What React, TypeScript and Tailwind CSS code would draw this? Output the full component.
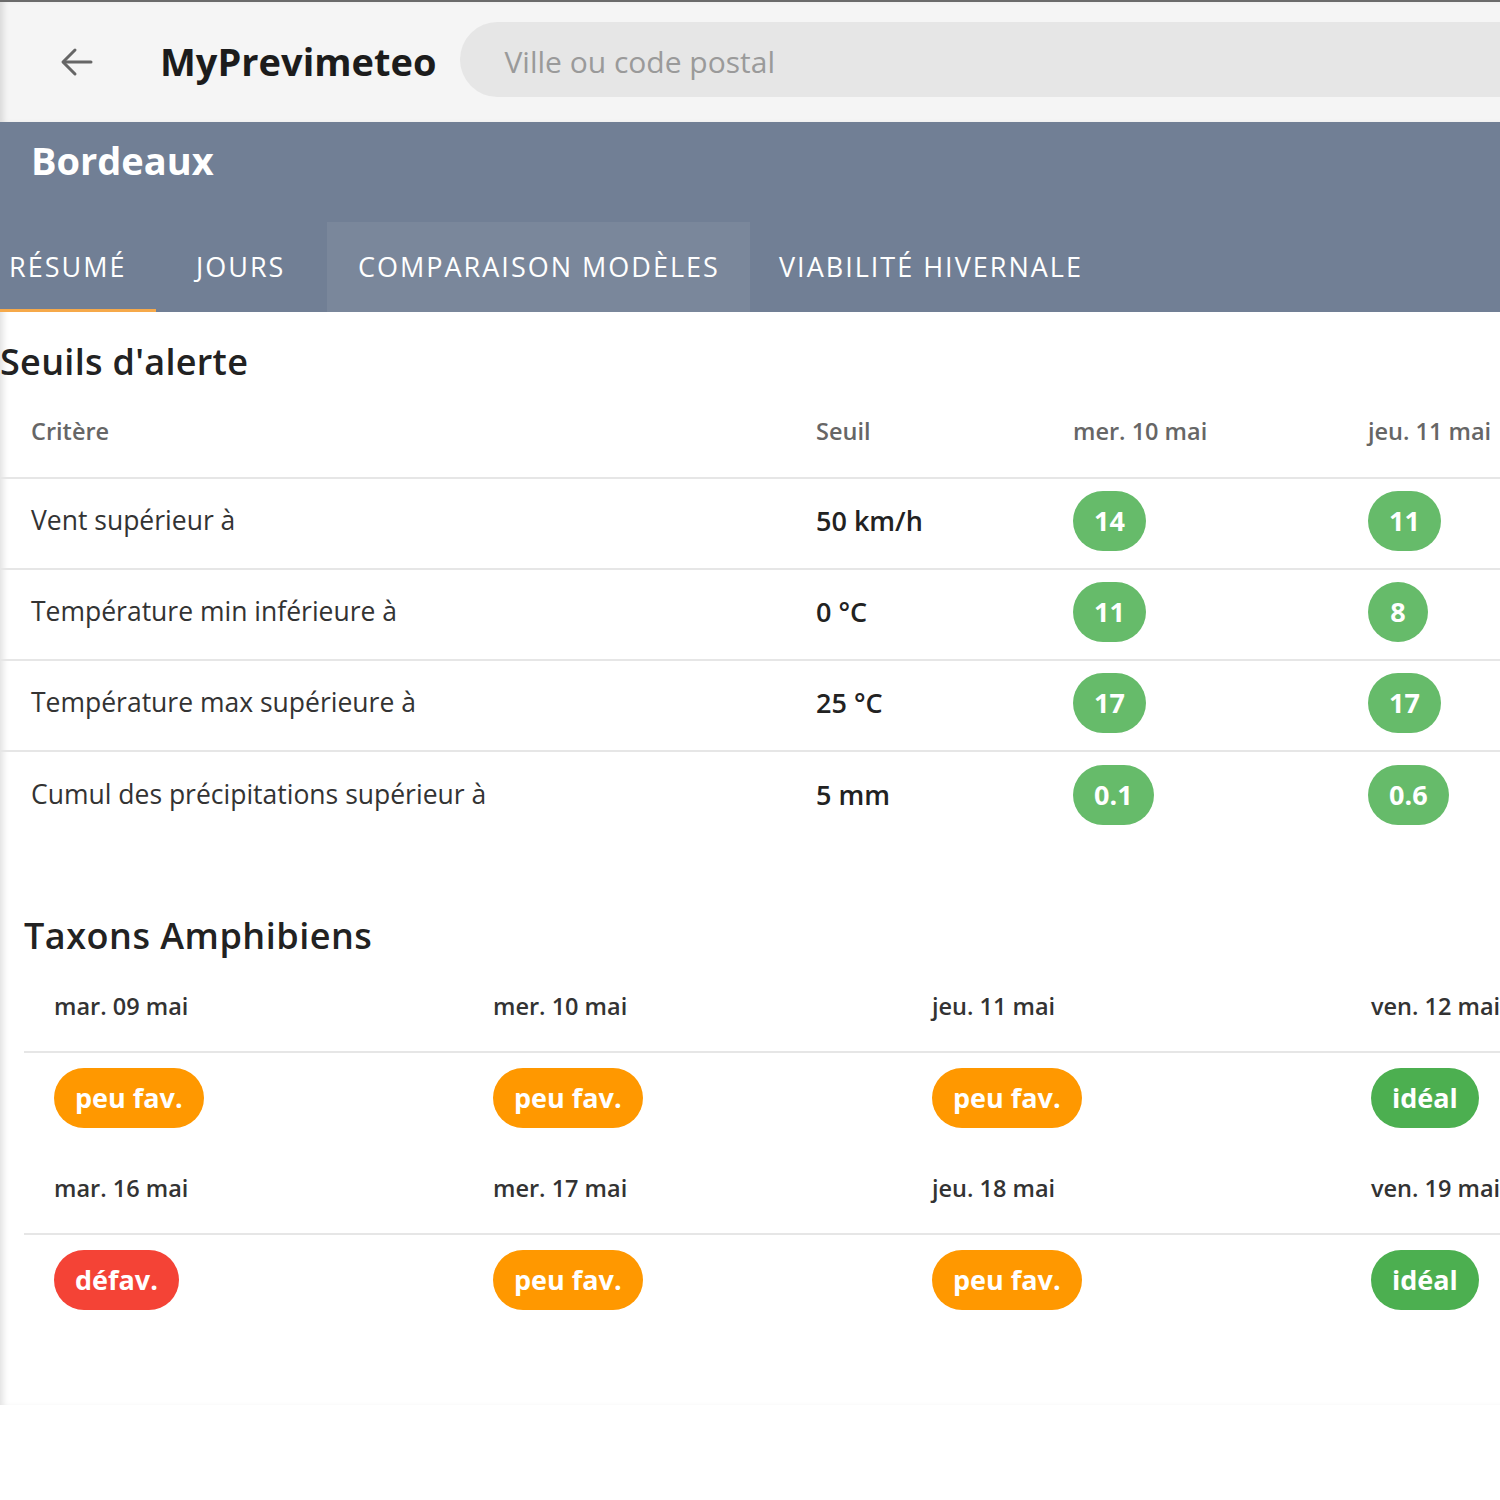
import React from "react";

const font = { fontFamily: '"Open Sans", "Noto Sans", sans-serif' };

type Tone = "green" | "ideal" | "orange" | "red";

function Badge({ label, tone }: { label: string; tone: Tone }) {
  const cls =
    tone === "green"
      ? "bg-[#66bb6a]"
      : tone === "ideal"
      ? "bg-[#4caf50]"
      : tone === "orange"
      ? "bg-[#ff9800]"
      : "bg-[#f44336]";
  return (
    <span
      className={`inline-flex h-[60px] min-w-[60px] items-center justify-center rounded-full px-[21px] text-[27px] font-bold text-white ${cls}`}
    >
      {label}
    </span>
  );
}

const alertRows = [
  { c: "Vent supérieur à", s: "50 km/h", a: "14", b: "11" },
  { c: "Température min inférieure à", s: "0 °C", a: "11", b: "8" },
  { c: "Température max supérieure à", s: "25 °C", a: "17", b: "17" },
  { c: "Cumul des précipitations supérieur à", s: "5 mm", a: "0.1", b: "0.6" },
];

const taxons: { d: string; l: string; t: Tone }[][] = [
  [
    { d: "mar. 09 mai", l: "peu fav.", t: "orange" },
    { d: "mer. 10 mai", l: "peu fav.", t: "orange" },
    { d: "jeu. 11 mai", l: "peu fav.", t: "orange" },
    { d: "ven. 12 mai", l: "idéal", t: "ideal" },
  ],
  [
    { d: "mar. 16 mai", l: "défav.", t: "red" },
    { d: "mer. 17 mai", l: "peu fav.", t: "orange" },
    { d: "jeu. 18 mai", l: "peu fav.", t: "orange" },
    { d: "ven. 19 mai", l: "idéal", t: "ideal" },
  ],
];

export default function App() {
  return (
    <div className="w-[1500px] overflow-hidden bg-white" style={font}>
      <div className="relative h-[1405px] overflow-hidden shadow-[inset_6px_0_6px_-3px_rgba(0,0,0,0.12)]">
        {/* Top app bar */}
        <div className="flex h-[122px] items-start border-t-2 border-[#6b6b6b] bg-[#f5f5f5] shadow-[inset_6px_0_6px_-3px_rgba(0,0,0,0.12)]">
          <div className="ml-[60px] mt-[45px] flex w-[34px] items-center justify-center text-[#666]">
            <svg width="34" height="30" viewBox="0 0 34 30" fill="none" stroke="currentColor" strokeWidth="3" strokeLinecap="round" strokeLinejoin="round">
              <path d="M31 15H4" />
              <path d="M15 3L3 15l12 12" />
            </svg>
          </div>
          <div className="ml-[66px] mt-[31px] text-[38px] font-bold leading-[57px] text-[#1c1c1c]">MyPrevimeteo</div>
          <div className="ml-[24px] mt-[20px] flex h-[75px] flex-1 items-center rounded-l-full bg-[#e6e6e6] pl-[44px] pt-[4px] text-[30px] text-[#9a9a9a]">
            Ville ou code postal
          </div>
        </div>

        {/* City band */}
        <div className="bg-[#717f95]">
          <div className="h-[100px] pl-[31px] pt-[10px] text-[38px] font-bold text-white">Bordeaux</div>
          <div className="flex h-[90px] text-[27px] uppercase tracking-[2px] text-white">
            <div className="relative flex w-[156px] items-center pl-[9px]">
              Résumé
              <div className="absolute bottom-0 left-0 h-[3px] w-full bg-[#f6a94a]" />
            </div>
            <div className="flex w-[171px] items-center pl-[40px]">Jours</div>
            <div className="flex w-[423px] items-center bg-[#7a879b] pl-[31px]">Comparaison modèles</div>
            <div className="flex items-center pl-[29px]">Viabilité hivernale</div>
          </div>
        </div>

        {/* Seuils d'alerte */}
        <div className="pt-[23px]">
          <h2 className="text-[36px] font-semibold leading-[54px] tracking-[0.3px] text-[#222]">Seuils d'alerte</h2>
          <div className="w-[1650px]">
            <div className="grid h-[90px] grid-cols-[785px_257px_295px_295px] items-center border-b-2 border-[#e6e6e6] pb-[2px] text-[23.5px] font-semibold text-[#666]">
              <div className="pl-[31px]">Critère</div>
              <div className="pl-[31px]">Seuil</div>
              <div className="pl-[31px]">mer. 10 mai</div>
              <div className="pl-[31px]">jeu. 11 mai</div>
            </div>
            {alertRows.map((r, i) => (
              <div
                key={r.c}
                className={`grid h-[91px] grid-cols-[785px_257px_295px_295px] items-center pb-[5px] text-[26.5px] ${
                  i < alertRows.length - 1 ? "border-b-2 border-[#e6e6e6]" : ""
                }`}
              >
                <div className="pl-[31px] text-[#333]">{r.c}</div>
                <div className="pl-[31px] text-[27px] font-semibold text-[#222]">{r.s}</div>
                <div className="pl-[31px]">
                  <Badge label={r.a} tone="green" />
                </div>
                <div className="pl-[31px]">
                  <Badge label={r.b} tone="green" />
                </div>
              </div>
            ))}
          </div>
        </div>

        {/* Taxons Amphibiens */}
        <div className="pl-[24px] pt-[66px]">
          <h2 className="text-[36px] font-semibold leading-[54px] tracking-[0.5px] text-[#222]">Taxons Amphibiens</h2>
          <div className="w-[1800px]">
            {taxons.map((row, ri) => (
              <div key={ri} className={ri > 0 ? "mt-[17px]" : ""}>
                <div className="grid h-[90px] grid-cols-[439px_439px_439px_439px] items-center border-b-2 border-[#e6e6e6] pb-[1px] text-[23.5px] font-semibold text-[#333]">
                  {row.map((c) => (
                    <div key={c.d} className="pl-[30px]">{c.d}</div>
                  ))}
                </div>
                <div className="grid grid-cols-[439px_439px_439px_439px] pt-[15px]">
                  {row.map((c) => (
                    <div key={c.d} className="flex h-[60px] pl-[30px]">
                      <Badge label={c.l} tone={c.t} />
                    </div>
                  ))}
                </div>
              </div>
            ))}
          </div>
        </div>
      </div>
      <div className="h-[95px] bg-white" />
    </div>
  );
}
